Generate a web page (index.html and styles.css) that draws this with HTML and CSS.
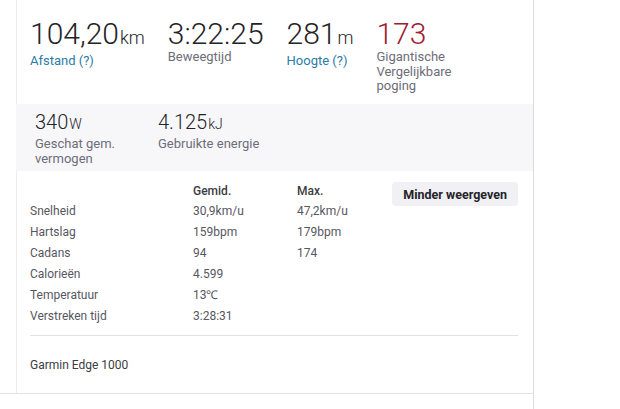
FILE: index.html
```html
<!DOCTYPE html>
<html lang="nl">
<head>
<meta charset="utf-8">
<title>Activiteit</title>
<link rel="stylesheet" href="styles.css">
</head>
<body>
<div class="page">
  <div class="frame">
    <div class="panel">
      <ul class="stats stats-main">
        <li class="stat">
          <div class="stat-value">104,20<abbr class="unit">km</abbr></div>
          <div class="stat-label link">Afstand (?)</div>
        </li>
        <li class="stat">
          <div class="stat-value">3:22:25</div>
          <div class="stat-label">Beweegtijd</div>
        </li>
        <li class="stat">
          <div class="stat-value">281<abbr class="unit">m</abbr></div>
          <div class="stat-label link">Hoogte (?)</div>
        </li>
        <li class="stat effort">
          <div class="stat-value">173</div>
          <div class="stat-label">Gigantische Vergelijkbare poging</div>
        </li>
      </ul>
      <div class="band">
        <ul class="stats stats-secondary">
          <li class="stat">
            <div class="stat-value">340<abbr class="unit">W</abbr></div>
            <div class="stat-label">Geschat gem. vermogen</div>
          </li>
          <li class="stat">
            <div class="stat-value">4.125<abbr class="unit">kJ</abbr></div>
            <div class="stat-label">Gebruikte energie</div>
          </li>
        </ul>
      </div>
      <div class="details">
        <div class="details-top">
          <table class="more-stats">
            <thead>
              <tr><th></th><th>Gemid.</th><th>Max.</th></tr>
            </thead>
            <tbody>
              <tr><td>Snelheid</td><td>30,9km/u</td><td>47,2km/u</td></tr>
              <tr><td>Hartslag</td><td>159bpm</td><td>179bpm</td></tr>
              <tr><td>Cadans</td><td>94</td><td>174</td></tr>
              <tr><td>Calorieën</td><td>4.599</td><td></td></tr>
              <tr><td>Temperatuur</td><td>13℃</td><td></td></tr>
              <tr><td>Verstreken tijd</td><td>3:28:31</td><td></td></tr>
            </tbody>
          </table>
          <button class="toggle" type="button">Minder weergeven</button>
        </div>
        <div class="device">Garmin Edge 1000</div>
      </div>
    </div>
  </div>
</div>
</body>
</html>
```

FILE: styles.css
```css
html, body {
  margin: 0;
  padding: 0;
  background: #ffffff;
}

body {
  font-family: Roboto, "Liberation Sans", Arial, sans-serif;
  color: #242428;
}

.page {
  width: 533px;
  min-height: 409px;
  border-right: 1px solid #dcdce0;
}

.frame {
  border-bottom: 1px solid #e2e2e6;
}

.panel {
  margin-left: 16px;
  border-left: 1px solid #ececef;
}

.stats {
  list-style: none;
  margin: 0;
  display: flex;
  align-items: flex-start;
}

.stats-main {
  gap: 23px;
  padding: 19px 0 10.5px 13px;
}

.stat-value {
  white-space: nowrap;
  font-weight: 300;
  color: #242428;
}

.unit {
  text-decoration: none;
  margin-left: 1px;
}

.stats-main .stat-value {
  font-size: 30px;
  line-height: 30px;
  margin-bottom: 1px;
}

.stats-main .unit {
  font-size: 18px;
}

.stat-label {
  font-size: 13px;
  line-height: 14.5px;
  color: #6d6d78;
  max-width: 106px;
}

.stat-label.link {
  color: #2a7ca6;
}

.effort .stat-value {
  color: #a0202e;
}

.band {
  background: #f7f7fa;
  margin-left: -1px;
  padding: 6px 0 5px 19px;
}

.stats-secondary {
  gap: 17px;
  padding: 0;
}

.stats-secondary .stat-value {
  font-size: 20px;
  line-height: 25px;
}

.stats-secondary .unit {
  font-size: 14px;
  margin-left: 1px;
}

.details {
  padding: 10px 15px 0 13px;
}

.details-top {
  display: flex;
  justify-content: space-between;
  align-items: flex-start;
}

.more-stats {
  border-collapse: collapse;
  font-size: 12px;
  color: #57575f;
}

.more-stats th,
.more-stats td {
  padding: 0;
  text-align: left;
  vertical-align: middle;
}

.more-stats th {
  height: 20px;
  line-height: 20px;
  font-weight: 500;
  color: #3c3c42;
}

.more-stats td {
  height: 21px;
  line-height: 21px;
}

.more-stats td:first-child,
.more-stats th:first-child {
  width: 163px;
}

.more-stats td:nth-child(2),
.more-stats th:nth-child(2) {
  width: 104px;
}

.toggle {
  margin-top: 1px;
  height: 24px;
  padding: 0 11px;
  border: none;
  border-radius: 4px;
  background: #f0f0f5;
  font-family: Roboto, "Liberation Sans", Arial, sans-serif;
  font-size: 12.5px;
  font-weight: 700;
  color: #242428;
  cursor: pointer;
}

.device {
  margin-top: 8px;
  border-top: 1px solid #e0e0e6;
  padding: 19px 0 17px;
  font-size: 12px;
  line-height: 21px;
  color: #3c3c42;
}
```
